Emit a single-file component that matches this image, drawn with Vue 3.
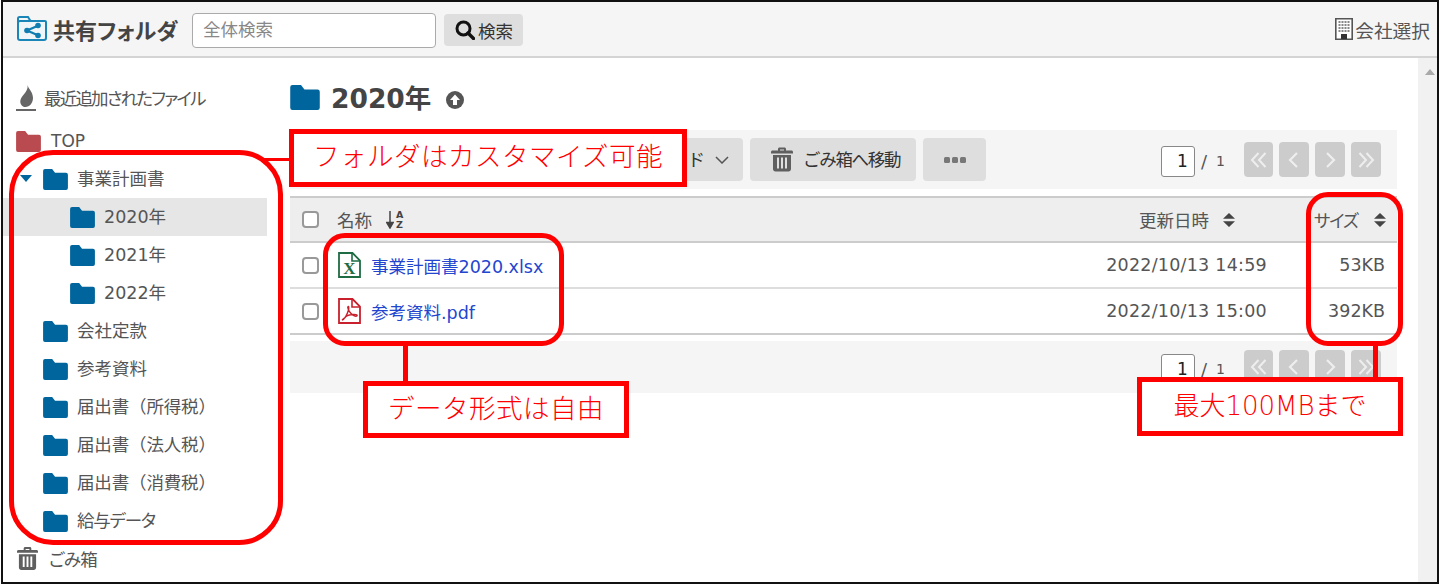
<script setup>
const tree = [
  { name: '事業計画書', level: 1, open: true },
  { name: '2020年', level: 2, active: true },
  { name: '2021年', level: 2 },
  { name: '2022年', level: 2 },
  { name: '会社定款', level: 1 },
  { name: '参考資料', level: 1 },
  { name: '届出書（所得税）', level: 1, solid: true },
  { name: '届出書（法人税）', level: 1, solid: true },
  { name: '届出書（消費税）', level: 1, solid: true },
  { name: '給与データ', level: 1, tight: true },
]
const files = [
  { name: '事業計画書2020.xlsx', type: 'xlsx', date: '2022/10/13 14:59', size: '53KB' },
  { name: '参考資料.pdf', type: 'pdf', date: '2022/10/13 15:00', size: '392KB' },
]
</script>

<template>
  <div class="root">
    <svg class="defs" aria-hidden="true">
      <symbol id="folder" viewBox="0 0 26 22">
        <path d="M2 0H9.500L12.500 4H24a2 2 0 0 1 2 2V20a2 2 0 0 1-2 2H2a2 2 0 0 1-2-2V2a2 2 0 0 1 2-2z" fill="currentColor" />
      </symbol>
      <symbol id="trash" viewBox="0 0 22 24">
        <path fill="currentColor" fill-rule="evenodd" d="M7 1.500C7 .7 7.700 0 8.500 0h5c.8 0 1.500.7 1.500 1.500V3h5.500C21.300 3 22 3.700 22 4.500V6H0V4.500C0 3.700.7 3 1.500 3H7zM9 2v1h4V2zM2 7.500h18V21.500c0 1.400-1.100 2.500-2.500 2.500h-13C3.100 24 2 22.900 2 21.500zM6 10v11h2V10zM10 10v11h2V10zM14 10v11h2V10z" />
      </symbol>
      <symbol id="sort" viewBox="0 0 12 14">
        <path d="M6 0L12 5.800H0zM6 14L0 8.200H12z" fill="currentColor" />
      </symbol>
      <symbol id="double-left" viewBox="0 0 18 18">
        <path d="M8.500 2L2 9l6.500 7M15.500 2L9 9l6.500 7" fill="none" stroke="currentColor" stroke-width="2" />
      </symbol>
      <symbol id="double-right" viewBox="0 0 18 18">
        <path d="M2.500 2L9 9l-6.500 7M9.500 2L16 9l-6.500 7" fill="none" stroke="currentColor" stroke-width="2" />
      </symbol>
      <symbol id="left" viewBox="0 0 18 18">
        <path d="M12 2L5 9l7 7" fill="none" stroke="currentColor" stroke-width="2.200" />
      </symbol>
      <symbol id="right" viewBox="0 0 18 18">
        <path d="M6 2l7 7-7 7" fill="none" stroke="currentColor" stroke-width="2.200" />
      </symbol>
    </svg>

    <div class="frame">
      <header class="topbar">
        <svg class="logo" viewBox="0 0 30 25">
          <path d="M1 7V2.500A1.500 1.500 0 0 1 2.500 1H11l2.500 4" fill="none" stroke="#1a86b8" stroke-width="2" />
          <path d="M1 7a2 2 0 0 1 2-2h25a1 1 0 0 1 1 1v16a2 2 0 0 1-2 2H3a2 2 0 0 1-2-2z" fill="#eef6fa" stroke="#1a86b8" stroke-width="2" />
          <path d="M21.500 9.500L10 14.500l11.500 5" fill="none" stroke="#0f7db0" stroke-width="2.200" />
          <circle cx="21" cy="9.500" r="2.800" fill="#0f7db0" />
          <circle cx="21" cy="19.500" r="2.800" fill="#0f7db0" />
          <circle cx="10" cy="14.500" r="2.800" fill="#0f7db0" />
        </svg>
        <h1 class="brand">共有フォルダ</h1>
        <div class="search-input">全体検索</div>
        <button class="search-btn">
          <svg class="search-icon" viewBox="0 0 20 20">
            <circle cx="8.500" cy="8.500" r="6.500" fill="none" stroke="#111" stroke-width="3" />
            <path d="M13 13l5.500 5.500" stroke="#111" stroke-width="3.400" stroke-linecap="round" />
          </svg>
          <span>検索</span>
        </button>
        <div class="company">
          <svg class="building" viewBox="0 0 18 22">
            <path d="M.8.8H17.200V21.200H.8z" fill="#fff" stroke="#555" stroke-width="1.600" />
            <path d="M3.500 4h11M3.500 7h11M3.500 10h11M3.500 13h11" stroke="#888" stroke-width="1.800" stroke-dasharray="2 1" />
            <path d="M6 16h6v5H6z" fill="#333" />
          </svg>
          <span>会社選択</span>
        </div>
      </header>

      <div class="body">
        <aside class="sidebar">
          <div class="recent">
            <svg class="flame" viewBox="0 0 20 28">
              <path d="M11.500 0C12.500 4 17 7 17 13c0 5-3.500 9-7.500 9-.8 0-1.800-.2-2.500-.6C4.500 19.800 3.500 16.500 5 13.500 7 9.500 12.500 6 11.500 0z" fill="#666" />
              <path d="M0 25H20" stroke="#666" stroke-width="2" />
            </svg>
            <span class="recent-label">最近追加されたファイル</span>
          </div>
          <div class="top-row">
            <svg class="folder"><use href="#folder" /></svg>
            <span>TOP</span>
          </div>
          <ul class="tree">
            <li
              v-for="item in tree"
              :key="item.name"
              class="tree-row"
              :class="[`level-${item.level}`, { active: item.active, solid: item.solid, tight: item.tight }]"
            >
              <span v-if="item.open" class="caret"></span>
              <svg class="folder"><use href="#folder" /></svg>
              <span class="tree-label">{{ item.name }}</span>
            </li>
          </ul>
          <div class="trash-row">
            <svg class="trash-side"><use href="#trash" /></svg>
            <span class="trash-label">ごみ箱</span>
          </div>
        </aside>

        <main class="main">
          <div class="title-row">
            <svg class="title-folder"><use href="#folder" /></svg>
            <h2 class="title">2020年</h2>
            <svg class="up-icon" viewBox="0 0 18 18">
              <circle cx="9" cy="9" r="9" fill="#555" />
              <path d="M9 3.500L14 9h-3v5H7V9H4z" fill="#fff" />
            </svg>
          </div>

          <div class="bar toolbar">
            <div class="tools">
              <button class="tool tool-download">
                <span class="tool-label">ダウンロード</span>
                <svg class="chev" viewBox="0 0 14 8"><path d="M1 1l6 6 6-6" fill="none" stroke="#555" stroke-width="1.500" /></svg>
              </button>
              <button class="tool tool-trash">
                <svg class="trash-tool"><use href="#trash" /></svg>
                <span class="tool-label">ごみ箱へ移動</span>
              </button>
              <button class="tool tool-more">
                <svg class="dots" viewBox="0 0 22 6">
                  <rect x="0" y="0" width="6" height="6" rx="1.500" /><rect x="8" y="0" width="6" height="6" rx="1.500" /><rect x="16" y="0" width="6" height="6" rx="1.500" />
                </svg>
              </button>
            </div>
            <div class="pager">
              <span class="page-input">1</span>
              <span class="slash">/</span>
              <span class="page-total">1</span>
              <span class="page-btn"><svg><use href="#double-left" /></svg></span>
              <span class="page-btn"><svg><use href="#left" /></svg></span>
              <span class="page-btn"><svg><use href="#right" /></svg></span>
              <span class="page-btn"><svg><use href="#double-right" /></svg></span>
            </div>
          </div>

          <div class="table">
            <div class="row head">
              <span class="check"></span>
              <span class="name-head">名称</span>
              <span class="az">
                <svg class="az-arrow" viewBox="0 0 8 18"><path d="M4 0v14M0.800 11.500L4 17l3.200-5.500z" fill="#444" stroke="#444" stroke-width="1.500" /></svg>
                <span class="az-letters">A<br />Z</span>
              </span>
              <span class="date-head">更新日時<svg class="sort"><use href="#sort" /></svg></span>
              <span class="size-head"><span class="size-label">サイズ</span><svg class="sort"><use href="#sort" /></svg></span>
            </div>
            <div v-for="file in files" :key="file.name" class="row file">
              <span class="check"></span>
              <svg v-if="file.type === 'xlsx'" class="file-icon" viewBox="0 0 23 26">
                <path d="M1 1h13.500L22 8.500V25H1z" fill="#fff" stroke="#1f6b43" stroke-width="1.800" />
                <path d="M14 1v8h8" fill="none" stroke="#1f6b43" stroke-width="1.600" />
                <text x="11.500" y="22" text-anchor="middle" class="x-mark">X</text>
              </svg>
              <svg v-else class="file-icon" viewBox="0 0 23 26">
                <path d="M1 1h13.500L22 8.500V25H1z" fill="#fff" stroke="#c8202c" stroke-width="1.800" />
                <path d="M14 1v8h8" fill="none" stroke="#c8202c" stroke-width="1.600" />
                <path d="M4 22c3-1 5-5 6.500-10 .5-2 .3-4-.5-3.500-.8.5.5 4.500 3 7 2 2.300 5 3.300 6 2.300.8-1-2-1.800-5-1.300-3 .4-6 1.500-7 3z" fill="none" stroke="#c8202c" stroke-width="1.400" />
              </svg>
              <a class="file-name">{{ file.name }}</a>
              <span class="date">{{ file.date }}</span>
              <span class="size">{{ file.size }}</span>
            </div>
          </div>

          <div class="bar footer-bar">
            <div class="pager">
              <span class="page-input">1</span>
              <span class="slash">/</span>
              <span class="page-total">1</span>
              <span class="page-btn"><svg><use href="#double-left" /></svg></span>
              <span class="page-btn"><svg><use href="#left" /></svg></span>
              <span class="page-btn"><svg><use href="#right" /></svg></span>
              <span class="page-btn"><svg><use href="#double-right" /></svg></span>
            </div>
          </div>
        </main>

        <div class="scrollbar"><span class="scroll-up"></span></div>
      </div>
    </div>

    <!-- red annotations drawn over the screenshot -->
    <div class="ring ring-tree"></div>
    <div class="ring ring-files"></div>
    <div class="ring ring-size"></div>
    <div class="link link-folder"></div>
    <div class="link link-files"></div>
    <div class="link link-size"></div>
    <div class="note note-folder">フォルダはカスタマイズ可能</div>
    <div class="note note-files">データ形式は自由</div>
    <div class="note note-size">最大100MBまで</div>
  </div>
</template>

<style>
html, body { background: #fff; }
</style>

<style scoped>
.root {
  position: relative;
  width: 1441px;
  height: 586px;
  overflow: hidden;
  font-family: "DejaVu Sans", "Noto Sans CJK JP", sans-serif;
  font-size: 17.500px;
  font-feature-settings: "palt";
  color: #555;
  background: #fff;
}
.defs { position: absolute; width: 0; height: 0; }
.frame {
  box-sizing: border-box;
  width: 1438px;
  height: 584px;
  margin: 0 0 0 1px;
  border: 2px solid #111;
  display: flex;
  flex-direction: column;
  overflow: hidden;
}
button { font-family: inherit; border: 0; padding: 0; }
ul { list-style: none; margin: 0; padding: 0; }
h1, h2 { margin: 0; }

.topbar {
  box-sizing: border-box;
  height: 56px;
  flex: none;
  display: flex;
  align-items: center;
  background: #f5f5f5;
  border-bottom: 2px solid #d4d4d4;
  padding: 0 7px 0 14px;
}
.logo { width: 30px; height: 25px; margin-right: 6px; margin-top: -1px; }
.brand { font-size: 22px; font-weight: 700; color: #444; width: 139px; white-space: nowrap; }
.search-input {
  box-sizing: border-box;
  width: 244px;
  height: 35px;
  line-height: 33px;
  margin-top: 2px;
  border: 1px solid #aaa;
  border-radius: 4px;
  background: #fff;
  padding-left: 10px;
  font-size: 17.500px;
  color: #888;
}
.search-btn {
  display: flex;
  align-items: center;
  gap: 3px;
  box-sizing: border-box;
  width: 79px;
  height: 32px;
  margin-left: 8px;
  margin-top: 2px;
  padding-left: 11px;
  border-radius: 4px;
  background: #dedede;
  font-size: 17.500px;
  color: #333;
}
.search-icon { width: 20px; height: 20px; }
.company { margin-left: auto; display: flex; align-items: center; gap: 2px; font-size: 18.700px; color: #555; }
.building { width: 18px; height: 22px; }

.body { flex: 1; display: flex; min-height: 0; }
.sidebar { width: 264px; flex: none; }
.recent {
  display: flex; align-items: center;
  height: 28px;
  margin-top: 27px;
  padding-left: 13px;
  white-space: nowrap;
}
.recent-label { letter-spacing: -1.800px; margin-bottom: 3px; }
.flame { width: 20px; height: 28px; margin-right: 8px; flex: none; }
.top-row { display: flex; align-items: center; height: 24px; margin-top: 16px; padding-left: 13px; font-size: 17px; }
.top-row .folder { color: #b94a4f; margin-right: 10px; }
.folder { width: 25px; height: 21px; color: #00659c; flex: none; }
.tree { margin-top: 7px; }
.tree-row {
  position: relative;
  display: flex;
  align-items: center;
  height: 38px;
  gap: 9px;
  white-space: nowrap;
}
.tree-label { margin-bottom: 3px; }
.solid { font-feature-settings: normal; letter-spacing: -.150px; }
.tight .tree-label { letter-spacing: -1.200px; }
.level-1 { padding-left: 40px; }
.level-2 { padding-left: 67px; }
.tree-row.active { background: #e6e6e6; }
.caret {
  position: absolute;
  left: 17px;
  top: 15px;
  border-left: 6px solid transparent;
  border-right: 6px solid transparent;
  border-top: 7px solid #00659c;
}
.trash-row { display: flex; align-items: center; height: 37px; padding-left: 14px; }
.trash-label { letter-spacing: -.600px; }
.trash-side { width: 21px; height: 23px; color: #5f5f5f; margin-right: 11px; }

.main { width: 1107px; flex: none; margin-left: 23px; }
.title-row { display: flex; align-items: center; height: 36px; margin-top: 21px; }
.title-folder { width: 30px; height: 25px; color: #00659c; }
.title { font-size: 26.500px; font-weight: 700; color: #444; margin-left: 11px; margin-bottom: 2px; white-space: nowrap; }
.up-icon { width: 18px; height: 18px; margin-left: 15px; margin-top: 5px; }

.bar { background: #f5f5f5; box-sizing: border-box; display: flex; align-items: center; }
.toolbar { height: 59px; margin-top: 15px; padding: 0 0 0 8px; }
.tools { display: flex; gap: 7px; }
.tool {
  display: flex;
  align-items: center;
  box-sizing: border-box;
  height: 43px;
  border-radius: 4px;
  background: #dedede;
  color: #333;
  font-size: 17.500px;
  white-space: nowrap;
}
.tool-label { margin-bottom: 3px; }
.tool-download { width: 445px; justify-content: flex-end; gap: 10px; padding-right: 14px; }
.chev { width: 14px; height: 8px; }
.tool-trash { width: 166px; padding-left: 21px; letter-spacing: -1.300px; }
.trash-tool { width: 22px; height: 25px; color: #5f5f5f; margin-right: 10px; }
.tool-more { width: 63px; justify-content: center; }
.dots { width: 22px; height: 6px; fill: #777; }

.pager { margin-left: auto; margin-right: 16px; display: flex; align-items: flex-end; }
.page-input {
  box-sizing: border-box;
  width: 34px;
  height: 31px;
  line-height: 29px;
  border: 1px solid #888;
  border-radius: 3px;
  background: #fff;
  text-align: right;
  padding-right: 6px;
  font-size: 17px;
  color: #222;
}
.slash { font-size: 18px; margin-left: 6px; color: #555; line-height: 29px; margin-bottom: 1px; }
.page-total { font-size: 14px; margin-left: 9px; width: 28px; color: #555; line-height: 29px; margin-bottom: 1px; }
.page-btn {
  display: flex; align-items: center; justify-content: center;
  width: 30px; height: 35px;
  margin-right: 6px;
  background: #ccc;
  border-radius: 4px;
  color: #eee;
}
.page-total + .page-btn { width: 29px; }
.page-btn:last-child { margin-right: 0; }
.page-btn svg { width: 18px; height: 18px; }

.table { margin-top: 7px; border-top: 2px solid #ccc; }
.row { display: flex; align-items: center; box-sizing: border-box; padding-left: 12px; }
.head { height: 45px; background: #eee; border-bottom: 2px solid #ccc; }
.file { height: 46px; border-bottom: 2px solid #ddd; }
.file:last-child { border-bottom-color: #ccc; }
.check {
  box-sizing: border-box;
  width: 17px; height: 17px;
  flex: none;
  border: 2px solid #999;
  border-radius: 4px;
  background: #fff;
}
.name-head { margin-left: 18px; }
.az { display: flex; align-items: center; margin-left: 14px; gap: 2px; }
.az-arrow { width: 8px; height: 18px; }
.az-letters { font-size: 9.500px; line-height: 9.500px; font-weight: 700; color: #444; }
.date-head { margin-left: auto; display: flex; align-items: center; gap: 14px; margin-right: 79px; }
.size-head { width: 71px; display: flex; align-items: center; gap: 16px; margin-right: 12px; white-space: nowrap; }
.size-label { letter-spacing: -1.300px; }
.sort { width: 12px; height: 14px; color: #444; flex: none; }
.file-icon { width: 23px; height: 26px; margin-left: 19px; flex: none; }
.x-mark { font-family: "Liberation Serif", serif; font-weight: 700; font-size: 17px; fill: #1f6b43; }
.file-name { margin-left: 10px; color: #2346cf; }
.date { margin-left: auto; margin-right: 118px; letter-spacing: .25px; }
.size { width: 0; margin-right: 12px; display: flex; justify-content: flex-end; }
.footer-bar { height: 52px; margin-top: 6px; }

.scrollbar { flex: 1; margin-left: 21px; background: #f1f1f1; position: relative; }
.scroll-up {
  position: absolute;
  left: 7px; top: 11px;
  border-left: 5px solid transparent;
  border-right: 5px solid transparent;
  border-bottom: 6px solid #a9a9a9;
}

.ring, .note { position: absolute; box-sizing: border-box; border: 5px solid #f00; }
.ring { background: transparent; }
.ring-tree { left: 9px; top: 150px; width: 274px; height: 395px; border-radius: 44px; }
.ring-files { left: 323px; top: 233px; width: 241px; height: 113px; border-radius: 22px; }
.ring-size { left: 1306px; top: 192px; width: 97px; height: 154px; border-radius: 22px; }
.link { position: absolute; background: #f00; }
.link-folder { left: 262px; top: 158px; width: 30px; height: 3px; }
.link-files { left: 403px; top: 345px; width: 5px; height: 37px; }
.link-size { left: 1373px; top: 345px; width: 5px; height: 33px; }
.note {
  background: #fff;
  color: #f00;
  font-family: "DejaVu Sans", "Noto Sans CJK JP", sans-serif;
  font-feature-settings: normal;
  font-size: 26.500px;
  font-weight: 300;
  display: flex;
  align-items: center;
  justify-content: center;
  white-space: nowrap;
  letter-spacing: .5px;
  padding-bottom: 6px;
}
.note-folder { left: 289px; top: 129px; width: 398px; height: 58px; padding-bottom: 7px; }
.note-files { left: 363px; top: 381px; width: 266px; height: 57px; }
.note-size { left: 1137px; top: 377px; width: 266px; height: 59px; font-size: 26px; letter-spacing: 0; }
</style>
